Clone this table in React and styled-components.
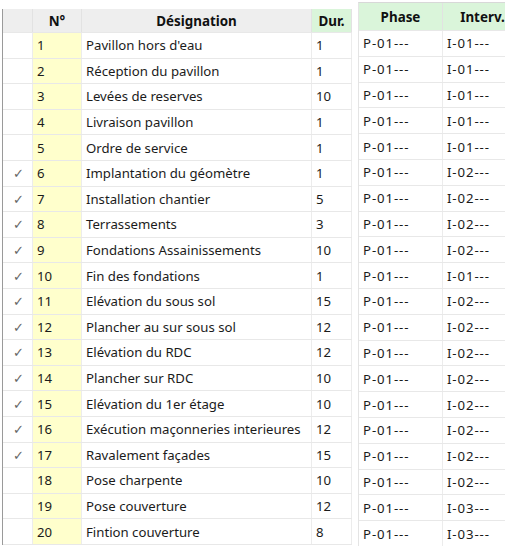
import styled, { createGlobalStyle } from "styled-components";

const GlobalStyle = createGlobalStyle`
  html, body {
    margin: 0;
    padding: 0;
    background: #ffffff;
    overflow: hidden;
  }
  body {
    font-family: "Noto Sans", "Open Sans", sans-serif;
    color: #1b1b1b;
  }
`;

const tasks = [
  { n: 1, name: "Pavillon hors d'eau", dur: 1, done: false, phase: "P-01---", interv: "I-01---" },
  { n: 2, name: "Réception du pavillon", dur: 1, done: false, phase: "P-01---", interv: "I-01---" },
  { n: 3, name: "Levées de reserves", dur: 10, done: false, phase: "P-01---", interv: "I-01---" },
  { n: 4, name: "Livraison pavillon", dur: 1, done: false, phase: "P-01---", interv: "I-01---" },
  { n: 5, name: "Ordre de service", dur: 1, done: false, phase: "P-01---", interv: "I-01---" },
  { n: 6, name: "Implantation du géomètre", dur: 1, done: true, phase: "P-01---", interv: "I-02---" },
  { n: 7, name: "Installation chantier", dur: 5, done: true, phase: "P-01---", interv: "I-02---" },
  { n: 8, name: "Terrassements", dur: 3, done: true, phase: "P-01---", interv: "I-02---" },
  { n: 9, name: "Fondations Assainissements", dur: 10, done: true, phase: "P-01---", interv: "I-02---" },
  { n: 10, name: "Fin des fondations", dur: 1, done: true, phase: "P-01---", interv: "I-01---" },
  { n: 11, name: "Elévation du sous sol", dur: 15, done: true, phase: "P-01---", interv: "I-02---" },
  { n: 12, name: "Plancher au sur sous sol", dur: 12, done: true, phase: "P-01---", interv: "I-02---" },
  { n: 13, name: "Elévation du RDC", dur: 12, done: true, phase: "P-01---", interv: "I-02---" },
  { n: 14, name: "Plancher sur RDC", dur: 10, done: true, phase: "P-01---", interv: "I-02---" },
  { n: 15, name: "Elévation du 1er étage", dur: 10, done: true, phase: "P-01---", interv: "I-02---" },
  { n: 16, name: "Exécution maçonneries interieures", dur: 12, done: true, phase: "P-01---", interv: "I-02---" },
  { n: 17, name: "Ravalement façades", dur: 15, done: true, phase: "P-01---", interv: "I-02---" },
  { n: 18, name: "Pose charpente", dur: 10, done: false, phase: "P-01---", interv: "I-02---" },
  { n: 19, name: "Pose couverture", dur: 12, done: false, phase: "P-01---", interv: "I-03---" },
  { n: 20, name: "Fintion couverture", dur: 8, done: false, phase: "P-01---", interv: "I-03---" },
];

const Screen = styled.div`
  display: flex;
  align-items: flex-start;
  gap: 6px;
  width: 505px;
  height: 546px;
  overflow: hidden;
`;

const TaskGrid = styled.div`
  margin-top: 9px;
  margin-left: 2px;
  border-left: 1px solid #9a9a9a;
  display: flex;
  flex-direction: column;
  flex: none;
`;

const SideGrid = styled.div`
  margin-top: 2px;
  border-top: 1px solid #d8d8d8;
  border-left: 1px solid #e4e4e4;
  display: flex;
  flex-direction: column;
  flex: none;
`;

const Row = styled.div`
  display: grid;
  grid-template-columns: ${(p) => p.$cols};
  height: ${(p) => p.$h}px;
  border-bottom: 1px solid #e8e8e8;
  box-sizing: border-box;
`;

const HeadCell = styled.div`
  display: flex;
  align-items: center;
  justify-content: center;
  font-weight: 700;
  font-size: 13.4px;
  background: ${(p) => (p.$green ? "#daf5da" : "#eeeeee")};
  border-right: 1px solid #e2e2e2;
  color: #111;
`;

const Cell = styled.div`
  display: flex;
  align-items: center;
  padding-left: ${(p) => p.$pad ?? 4}px;
  font-size: 13.2px;
  letter-spacing: ${(p) => p.$spread ?? 0}px;
  white-space: nowrap;
  overflow: hidden;
  background: ${(p) => p.$bg || "transparent"};
  border-right: 1px solid #ececec;
  color: #1b1b1b;
`;

const Check = styled.span`
  color: #666;
  font-size: 13px;
`;

const leftCols = "30px 49px 230px 40px";
const rightCols = "84px 80px";

export default function App() {
  return (
    <>
      <GlobalStyle />
      <Screen>
        <TaskGrid>
          <Row $cols={leftCols} $h={24}>
            <HeadCell />
            <HeadCell>N°</HeadCell>
            <HeadCell>Désignation</HeadCell>
            <HeadCell $green>Dur.</HeadCell>
          </Row>
          {tasks.map((t) => (
            <Row key={t.n} $cols={leftCols} $h={25.6}>
              <Cell $pad={10}>{t.done && <Check>✓</Check>}</Cell>
              <Cell $bg="#ffffcc">{t.n}</Cell>
              <Cell>{t.name}</Cell>
              <Cell>{t.dur}</Cell>
            </Row>
          ))}
        </TaskGrid>
        <SideGrid>
          <Row $cols={rightCols} $h={28}>
            <HeadCell $green>Phase</HeadCell>
            <HeadCell $green>Interv.</HeadCell>
          </Row>
          {tasks.map((t) => (
            <Row key={t.n} $cols={rightCols} $h={25.8}>
              <Cell $spread={0.9}>{t.phase}</Cell>
              <Cell $spread={0.9}>{t.interv}</Cell>
            </Row>
          ))}
        </SideGrid>
      </Screen>
    </>
  );
}
